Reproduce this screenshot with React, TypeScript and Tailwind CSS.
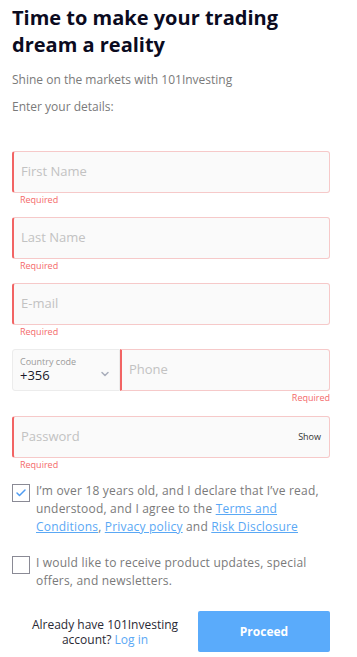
import React from 'react';
import { ChevronDown, Check } from 'lucide-react';

const font = { fontFamily: '"Open Sans", "Noto Sans", sans-serif' };

const Field: React.FC<{ placeholder: string; right?: React.ReactNode }> = ({ placeholder, right }) => (
  <div>
    <div className="flex h-[42px] items-center rounded-[3px] border border-[#f6c9c9] border-l-2 border-l-[#f26464] bg-[#fafafa] pl-[7px] pr-2">
      <span className="flex-1 text-[13px] text-[#c2c2c2]">{placeholder}</span>
      {right}
    </div>
    <p className="mt-[1px] pl-2 text-[9px] leading-[12px] text-[#f46a6a]">Required</p>
  </div>
);

const App: React.FC = () => {
  return (
    <div className="min-h-[657px] bg-white" style={font}>
      <div className="w-[330px] pl-3 pt-[4px]">
        <h1 className="text-[20px] font-bold leading-[27px] text-[#0b0b1f]">
          Time to make your trading dream a reality
        </h1>
        <p className="mt-[14px] text-[12px] leading-[16px] text-[#7a7a7a]">Shine on the markets with 101Investing</p>
        <p className="mt-[11px] text-[12px] leading-[16px] text-[#7a7a7a]">Enter your details:</p>

        <div className="mt-[36px] flex flex-col gap-[11px]">
          <Field placeholder="First Name" />
          <Field placeholder="Last Name" />
          <Field placeholder="E-mail" />

          <div>
            <div className="flex h-[42px]">
              <div className="flex w-[108px] items-center rounded-l-[3px] border border-[#ececec] bg-[#fafafa] pl-[7px] pr-[8px]">
                <div className="flex-1">
                  <p className="text-[9px] leading-[11px] text-[#9a9a9a]">Country code</p>
                  <p className="text-[13px] leading-[17px] text-[#1a1a2a]">+356</p>
                </div>
                <ChevronDown className="mt-2 h-[12px] w-[12px] text-[#a9aebb]" strokeWidth={3} />
              </div>
              <div className="flex flex-1 items-center rounded-r-[3px] border border-[#f6c9c9] border-l-2 border-l-[#f26464] bg-[#fafafa] pl-[7px]">
                <span className="text-[13px] text-[#c2c2c2]">Phone</span>
              </div>
            </div>
            <p className="mt-[1px] text-right text-[9px] leading-[12px] text-[#f46a6a]">Required</p>
          </div>

          <div className="mt-[1px]">
            <Field placeholder="Password" right={<span className="text-[9px] text-[#333]">Show</span>} />
          </div>
        </div>

        <div className="mt-[11px] flex gap-[6px]">
          <div className="mt-[2px] flex h-[18px] w-[18px] shrink-0 items-center justify-center border border-[#8a8a95] bg-white">
            <Check className="h-[12px] w-[12px] text-[#4f9cf2]" strokeWidth={3} />
          </div>
          <p className="text-[12px] leading-[18px] tracking-[0.2px] text-[#7a7a7a]">
            I’m over 18 years old, and I declare that I’ve read, understood, and I agree to the{' '}
            <a className="text-[#5aa8f5] underline">Terms and</a>{' '}
            <a className="text-[#5aa8f5] underline">Conditions</a>,{' '}
            <a className="text-[#5aa8f5] underline">Privacy policy</a> and{' '}
            <a className="text-[#5aa8f5] underline">Risk Disclosure</a>
          </p>
        </div>

        <div className="mt-[18px] flex gap-[6px]">
          <div className="mt-[2px] h-[18px] w-[18px] shrink-0 border border-[#8a8a95] bg-white" />
          <p className="text-[12px] leading-[18px] tracking-[0.2px] text-[#7a7a7a]">
            I would like to receive product updates, special offers, and newsletters.
          </p>
        </div>

        <div className="mt-[21px] flex items-center">
          <div className="flex-1 text-center text-[12px] leading-[15px] text-[#2a2a35]">
            <p>Already have 101Investing</p>
            <p>
              account? <a className="text-[#5aa8f5]">Log in</a>
            </p>
          </div>
          <button className="h-[41px] w-[132px] rounded-[2px] bg-[#5aabfb] text-[12px] font-bold text-white">
            Proceed
          </button>
        </div>
      </div>
    </div>
  );
};

export default App;
